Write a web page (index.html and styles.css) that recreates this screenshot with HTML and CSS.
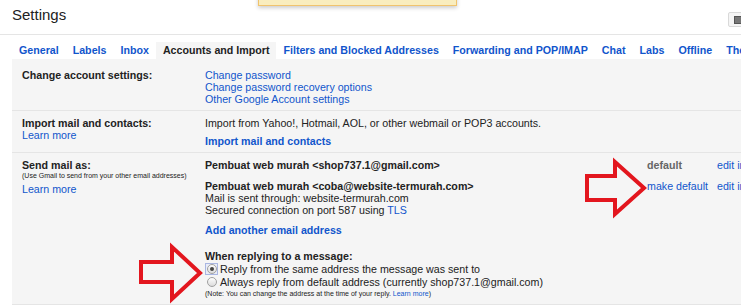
FILE: index.html
```html
<!DOCTYPE html>
<html lang="en">
<head>
  <meta charset="UTF-8">
  <meta name="viewport" content="width=device-width, initial-scale=1.0">
  <title>Settings</title>
  <link rel="stylesheet" href="styles.css">
</head>
<body>
  <!-- Notification bar peeking from the top -->
  <div class="notice"></div>

  <div class="top">
    <h1>Settings</h1>
    <button class="density" type="button"><span class="density-icon"></span></button>
  </div>

  <div class="tabs">
    <a href="#" class="tab">General</a>
    <a href="#" class="tab">Labels</a>
    <a href="#" class="tab">Inbox</a>
    <a href="#" class="tab active">Accounts and Import</a>
    <a href="#" class="tab">Filters and Blocked Addresses</a>
    <a href="#" class="tab">Forwarding and POP/IMAP</a>
    <a href="#" class="tab">Chat</a>
    <a href="#" class="tab">Labs</a>
    <a href="#" class="tab">Offline</a>
    <a href="#" class="tab">Themes</a>
  </div>

  <div class="panel">
    <!-- Change account settings -->
    <div class="row">
      <div class="label"><b>Change account settings:</b></div>
      <div class="value">
        <a href="#">Change password</a><br>
        <a href="#">Change password recovery options</a><br>
        <a href="#">Other Google Account settings</a>
      </div>
    </div>

    <!-- Import -->
    <div class="row">
      <div class="label">
        <b>Import mail and contacts:</b><br>
        <a href="#">Learn more</a>
      </div>
      <div class="value">
        <div>Import from Yahoo!, Hotmail, AOL, or other webmail or POP3 accounts.</div>
        <a href="#" class="action">Import mail and contacts</a>
      </div>
    </div>

    <!-- Send mail as -->
    <div class="row">
      <div class="label">
        <b>Send mail as:</b>
        <div class="small">(Use Gmail to send from your other email addresses)</div>
        <a href="#" class="learn">Learn more</a>
      </div>
      <div class="value">
        <div class="account">
          <div><b>Pembuat web murah &lt;shop737.1@gmail.com&gt;</b></div>
          <div class="status">default</div>
          <div><a href="#">edit info</a></div>
        </div>
        <div class="account second">
          <div>
            <b>Pembuat web murah &lt;coba@website-termurah.com&gt;</b><br>
            Mail is sent through: website-termurah.com<br>
            Secured connection on port 587 using <a href="#">TLS</a>
          </div>
          <div><a href="#">make default</a></div>
          <div><a href="#">edit info</a></div>
        </div>
        <a href="#" class="action add">Add another email address</a>

        <div class="reply-title"><b>When replying to a message:</b></div>
        <label class="choice">
          <span class="radio-wrap focused"><span class="radio checked"></span></span>
          Reply from the same address the message was sent to
        </label>
        <label class="choice">
          <span class="radio-wrap"><span class="radio"></span></span>
          Always reply from default address (currently shop737.1@gmail.com)
        </label>
        <div class="small note">(Note: You can change the address at the time of your reply. <a href="#">Learn more</a>)</div>
      </div>
    </div>
  </div>

  <!-- Red arrows drawn over the screenshot -->
  <svg class="marks" width="741" height="306" viewBox="0 0 741 306">
    <polygon points="141,262 172,262 172,247 200,273 172,299 172,282 141,282" />
    <polygon points="587,176 615,176 615,162 644,188 615,214 615,200 587,200" />
  </svg>
</body>
</html>
```

FILE: styles.css
```css
body {
  margin: 0;
  font-family: "Liberation Sans", Arial, sans-serif;
  font-size: 10.67px;
  line-height: 12px;
  color: #222;
  background-color: #fff;
  overflow: hidden;
  position: relative;
  height: 306px;
}

a {
  color: #15c;
  text-decoration: none;
}

.notice {
  position: absolute;
  left: 258px;
  top: -20px;
  width: 197px;
  height: 24px;
  background-color: #f9edbe;
  border: 1px solid #f0c36d;
  box-shadow: 0 2px 4px rgba(0, 0, 0, 0.2);
}

.top {
  display: flex;
  align-items: flex-start;
  height: 34px;
  border-bottom: 1px solid #e5e5e5;
}

.top h1 {
  margin: 0 0 0 12px;
  padding-top: 6px;
  font-size: 15px;
  font-weight: normal;
  line-height: 18px;
  color: #222;
}

.density {
  margin: 12px -16px 0 auto;
  width: 29px;
  height: 15px;
  padding: 0 0 0 5px;
  background-color: #f5f5f5;
  border: 1px solid #d9d9d9;
  border-radius: 2px;
  display: flex;
  align-items: center;
}

.density-icon {
  width: 8px;
  height: 6px;
  background-color: #777;
  border: 1px solid #555;
}

.tabs {
  display: flex;
  margin-top: 7px;
  padding-left: 12px;
  white-space: nowrap;
}

.tab {
  padding: 0 7px;
  line-height: 17px;
  font-weight: bold;
  color: #15c;
}

.tab.active {
  color: #222;
  background-color: #f5f5f5;
}

.panel {
  margin-left: 12px;
  padding-top: 4px;
  background-color: #f5f5f5;
}

.row {
  display: grid;
  grid-template-columns: 183px 1fr;
  padding: 6px 0 5px 10px;
  border-bottom: 1px solid #e5e5e5;
  white-space: nowrap;
}

.action {
  display: inline-block;
  font-weight: bold;
  margin-top: 6px;
}

.small {
  font-size: 7px;
  line-height: 10px;
}

.learn {
  display: inline-block;
  margin-top: 2px;
}

.account {
  display: grid;
  grid-template-columns: 442px 70px auto;
}

.account.second {
  margin-top: 9px;
}

.status {
  font-weight: bold;
  color: #666;
}

.add {
  margin-top: 8px;
}

.reply-title {
  margin-top: 14px;
}

.choice {
  display: flex;
  align-items: center;
  height: 13px;
}

.radio-wrap {
  width: 13px;
  height: 12px;
  margin-right: 2px;
  display: flex;
  align-items: center;
  justify-content: center;
  box-sizing: border-box;
  border: 1px solid transparent;
}

.radio-wrap.focused {
  border-color: #a9b6e2;
  background-color: #e9edf8;
}

.radio {
  width: 10px;
  height: 10px;
  box-sizing: border-box;
  border-radius: 50%;
  border: 1px solid #a0a0a0;
  background: linear-gradient(#fdfdfd, #dcdcdc);
  display: flex;
  align-items: center;
  justify-content: center;
}

.radio.checked::after {
  content: "";
  width: 4px;
  height: 4px;
  border-radius: 50%;
  background-color: #444;
}

.note {
  margin-top: 1px;
}

.marks {
  position: absolute;
  left: 0;
  top: 0;
  pointer-events: none;
}

.marks polygon {
  fill: none;
  stroke: #e3161e;
  stroke-width: 4;
  stroke-linejoin: miter;
}
```
